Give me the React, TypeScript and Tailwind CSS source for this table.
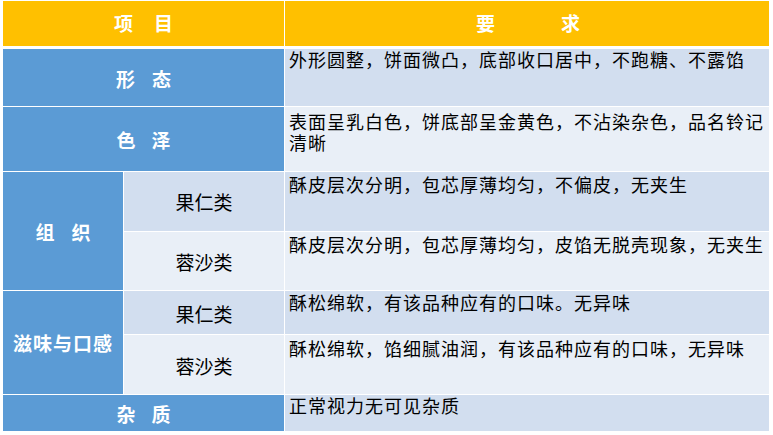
const FONT = { fontFamily: '"Noto Sans CJK SC", "Noto Sans", sans-serif' };

const LIGHT = "bg-[#d2deef]";
const LIGHTER = "bg-[#e9eff7]";

function Label({ chars, gap }: { chars: string[]; gap: string }) {
  return (
    <div className={`flex items-center justify-center text-[19px] font-bold text-white ${gap}`}>
      {chars.map((c) => (
        <span key={c}>{c}</span>
      ))}
    </div>
  );
}

function Req({ text, bg, pad }: { text: string; bg: string; pad: string }) {
  return (
    <div className={`${bg} pl-[4px] pr-[2px] ${pad} text-[18px] leading-[21px] tracking-[1px] text-black`}>
      {text}
    </div>
  );
}

export default function App() {
  return (
    <div className="h-[435px] w-[773px] bg-white pl-[3px] pt-[1px]" style={FONT}>
      {/* header */}
      <div className="grid h-[45px] grid-cols-[281px_484px] gap-x-px">
        <div className="flex items-center justify-center bg-[#ffc000]">
          <Label chars={["项", "目"]} gap="gap-[21px]" />
        </div>
        <div className="flex items-center justify-center bg-[#ffc000] pl-[2px]">
          <Label chars={["要", "求"]} gap="gap-[66px]" />
        </div>
      </div>

      {/* body */}
      <div className="mt-[3px] grid grid-cols-[120px_160px_484px] grid-rows-[57px_64px_59px_58px_43px_59px_36px] gap-px">
        <div className="col-span-2 flex items-center justify-center bg-[#5b9bd5] pt-[3px]">
          <Label chars={["形", "态"]} gap="gap-[17px]" />
        </div>
        <Req text="外形圆整，饼面微凸，底部收口居中，不跑糖、不露馅" bg={LIGHT} pad="pt-0" />

        <div className="col-span-2 flex items-center justify-center bg-[#5b9bd5] pt-[3px]">
          <Label chars={["色", "泽"]} gap="gap-[16px]" />
        </div>
        <Req text="表面呈乳白色，饼底部呈金黄色，不沾染杂色，品名铃记清晰" bg={LIGHTER} pad="pt-[4px]" />

        <div className="row-span-2 flex items-center justify-center bg-[#5b9bd5] pt-[2px]">
          <Label chars={["组", "织"]} gap="gap-[17px]" />
        </div>
        <div className={`${LIGHT} flex items-center justify-center pt-[2px] text-[19px] text-black`}>果仁类</div>
        <Req text="酥皮层次分明，包芯厚薄均匀，不偏皮，无夹生" bg={LIGHT} pad="pt-[2px]" />
        <div className={`${LIGHTER} flex items-center justify-center pt-[2px] text-[19px] text-black`}>蓉沙类</div>
        <Req text="酥皮层次分明，包芯厚薄均匀，皮馅无脱壳现象，无夹生" bg={LIGHTER} pad="pt-[2px]" />

        <div className="row-span-2 flex items-center justify-center bg-[#5b9bd5] pt-[2px]">
          <div className="text-[19px] font-bold tracking-[1px] text-white">滋味与口感</div>
        </div>
        <div className={`${LIGHT} flex items-center justify-center pt-[4px] text-[19px] text-black`}>果仁类</div>
        <Req text="酥松绵软，有该品种应有的口味。无异味" bg={LIGHT} pad="pt-[1px]" />
        <div className={`${LIGHTER} flex items-center justify-center pt-[3px] text-[19px] text-black`}>蓉沙类</div>
        <Req text="酥松绵软，馅细腻油润，有该品种应有的口味，无异味" bg={LIGHTER} pad="pt-[3px]" />

        <div className="col-span-2 flex items-center justify-center bg-[#5b9bd5] pt-[3px]">
          <Label chars={["杂", "质"]} gap="gap-[16px]" />
        </div>
        <Req text="正常视力无可见杂质" bg={LIGHT} pad="pt-0" />
      </div>
    </div>
  );
}
